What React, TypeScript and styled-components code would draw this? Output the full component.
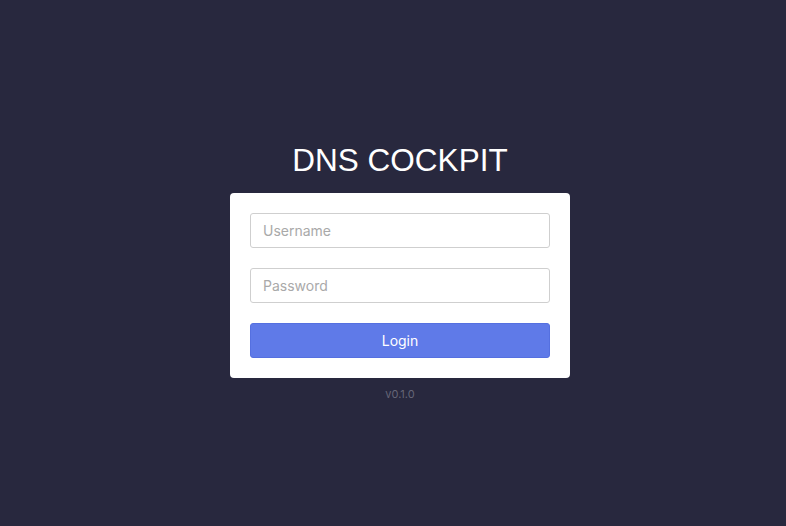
import React from 'react'
import styled, { createGlobalStyle } from 'styled-components'

export default function App() {
  return (
    <>
      <GlobalStyle />
      <PageWrapper>
        <Title>DNS COCKPIT</Title>
        <Card>
          <Input type="text" placeholder="Username" />
          <Input type="password" placeholder="Password" />
          <LoginButton>Login</LoginButton>
        </Card>
        <Version>v0.1.0</Version>
      </PageWrapper>
    </>
  )
}

/*---> Styles <---*/
const GlobalStyle = createGlobalStyle`
  html, body {
    margin: 0;
    padding: 0;
    background: #28283e;
  }
  * {
    box-sizing: border-box;
  }
`

const PageWrapper = styled.div`
  width: 786px;
  height: 526px;
  display: flex;
  flex-direction: column;
  align-items: center;
  padding-top: 142px;
  padding-left: 14px;
  background: #28283e;
`

const Title = styled.div`
  font-family: 'Liberation Sans', Arial, sans-serif;
  font-size: 31.5px;
  line-height: 36px;
  color: #ffffff;
  margin-bottom: 15px;
`

const Card = styled.div`
  width: 340px;
  background: #ffffff;
  border-radius: 4px;
  padding: 20px;
  display: flex;
  flex-direction: column;
  gap: 20px;
`

const Input = styled.input`
  width: 300px;
  height: 35px;
  border: 1px solid #cfcfcf;
  border-radius: 3px;
  padding: 0 12px;
  font-family: Inter, 'Noto Sans', sans-serif;
  font-size: 14px;
  color: #333;
  outline: none;

  &::placeholder {
    color: #a9a9a9;
  }
`

const LoginButton = styled.button`
  width: 300px;
  height: 35px;
  border: 1px solid #5570e0;
  border-radius: 3px;
  background: #5f7ae8;
  color: #ffffff;
  font-family: Inter, 'Noto Sans', sans-serif;
  font-size: 14px;
  cursor: pointer;
`

const Version = styled.div`
  margin-top: 9px;
  font-family: Inter, 'Noto Sans', sans-serif;
  font-size: 11px;
  color: #666677;
`
